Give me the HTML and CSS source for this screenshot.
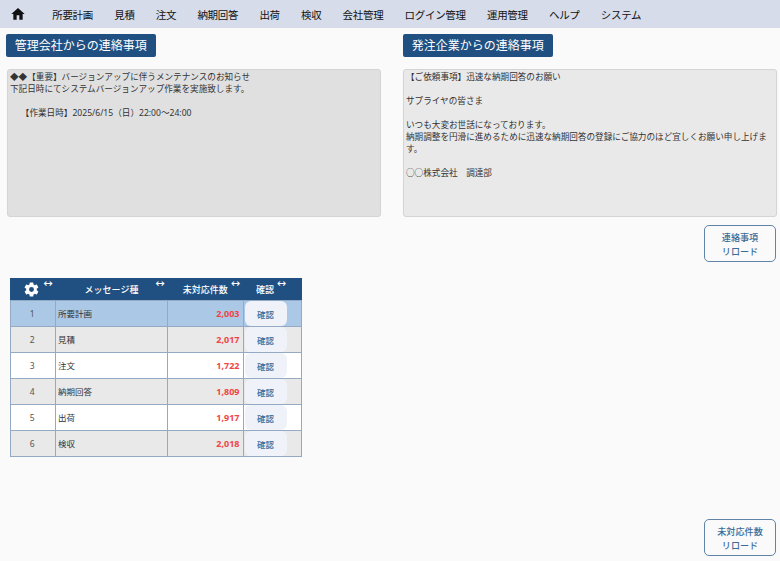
FILE: index.html
```html
<!DOCTYPE html>
<html lang="ja">
<head>
<meta charset="utf-8">
<title>連絡事項</title>
<link rel="stylesheet" href="styles.css">
</head>
<body>
<nav class="nav">
  <svg class="home" viewBox="0 0 24 24" width="16" height="16"><path d="M10 20.500v-6.500h4v6.500h5v-8.500h3L12 3 2 12h3v8.500z"/></svg>
  <a>所要計画</a><a>見積</a><a>注文</a><a>納期回答</a><a>出荷</a><a>検収</a><a>会社管理</a><a>ログイン管理</a><a>運用管理</a><a>ヘルプ</a><a>システム</a>
</nav>
<main class="main">
  <section class="notices">
    <div class="notice">
      <h2 class="title">管理会社からの連絡事項</h2>
      <div class="box box-dark">◆◆【重要】バージョンアップに伴うメンテナンスのお知らせ
下記日時にてシステムバージョンアップ作業を実施致します。

　 【作業日時】2025/6/15（日）22:00～24:00</div>
    </div>
    <div class="notice">
      <h2 class="title">発注企業からの連絡事項</h2>
      <div class="box box-light">【ご依頼事項】迅速な納期回答のお願い

サプライヤの皆さま

いつも大変お世話になっております。
納期調整を円滑に進めるために迅速な納期回答の登録にご協力のほど宜しくお願い申し上げます。

○○株式会社　調達部</div>
      <button class="reload">連絡事項<br>リロード</button>
    </div>
  </section>
  <section class="lower">
    <table class="grid">
      <colgroup><col class="c1"><col class="c2"><col class="c3"><col class="c4"></colgroup>
      <thead>
        <tr>
          <th><span class="hcell">
            <svg class="gear" viewBox="0 0 24 24" width="17" height="17"><path d="M19.400 13c.04-.32.070-.65.070-1s-.030-.68-.070-1l2.100-1.650c.19-.15.240-.42.120-.64l-2-3.460c-.12-.22-.39-.3-.61-.22l-2.490 1c-.52-.4-1.080-.73-1.690-.98l-.38-2.650A.49.49 0 0 0 14 2h-4c-.25 0-.46.18-.49.42l-.38 2.650c-.61.25-1.170.59-1.690.98l-2.490-1c-.23-.09-.49 0-.61.22l-2 3.460c-.13.22-.07.49.12.64L4.570 11c-.04.32-.07.660-.07 1s.03.68.07 1l-2.110 1.650c-.19.15-.24.42-.12.64l2 3.460c.12.22.39.3.61.22l2.490-1c.52.4 1.080.73 1.690.98l.38 2.650c.03.24.24.42.49.42h4c.25 0 .46-.18.49-.42l.38-2.650c.61-.25 1.170-.59 1.690-.98l2.490 1c.23.09.49 0 .61-.22l2-3.460c.12-.22.07-.49-.12-.64L19.400 13zM12 15.500a3.500 3.500 0 1 1 0-7 3.500 3.500 0 0 1 0 7z"/></svg>
            <i class="resize">↔</i></span></th>
          <th><span class="hcell">メッセージ種<i class="resize">↔</i></span></th>
          <th><span class="hcell">未対応件数<i class="resize">↔</i></span></th>
          <th><span class="hcell hcell-last">確認<i class="resize resize-last">↔</i></span></th>
        </tr>
      </thead>
      <tbody>
        <tr class="selected"><td class="no">1</td><td>所要計画</td><td class="count">2,003</td><td class="act"><button class="confirm">確認</button></td></tr>
        <tr class="alt"><td class="no">2</td><td>見積</td><td class="count">2,017</td><td class="act"><button class="confirm">確認</button></td></tr>
        <tr><td class="no">3</td><td>注文</td><td class="count">1,722</td><td class="act"><button class="confirm">確認</button></td></tr>
        <tr class="alt"><td class="no">4</td><td>納期回答</td><td class="count">1,809</td><td class="act"><button class="confirm">確認</button></td></tr>
        <tr><td class="no">5</td><td>出荷</td><td class="count">1,917</td><td class="act"><button class="confirm">確認</button></td></tr>
        <tr class="alt"><td class="no">6</td><td>検収</td><td class="count">2,018</td><td class="act"><button class="confirm">確認</button></td></tr>
      </tbody>
    </table>
    <button class="reload reload-bottom">未対応件数<br>リロード</button>
  </section>
</main>
</body>
</html>
```
FILE: styles.css
```css
* { box-sizing: border-box; }
html, body { margin: 0; height: 100%; }
body {
  width: 780px;
  height: 561px;
  overflow: hidden;
  background: #fafafa;
  color: #222;
  font-family: "Noto Sans", "Noto Sans CJK JP", sans-serif;
  display: flex;
  flex-direction: column;
}
.nav {
  height: 28px;
  flex: none;
  background: #d6dce9;
  display: flex;
  align-items: center;
  padding-left: 10px;
  gap: 21.200px;
  font-size: 10.500px;
  letter-spacing: -.3px;
  color: #111;
}
.home { margin-right: 5px; fill: #111; }
.main {
  flex: 1;
  display: flex;
  flex-direction: column;
  padding: 6px 3px 5px 6px;
}
.notices {
  display: grid;
  grid-template-columns: 375px 375px;
  column-gap: 22px;
}
.notice { display: flex; flex-direction: column; }
.title {
  margin: 0 0 12px;
  width: 149.500px;
  height: 23px;
  background: #205081;
  color: #fff;
  border-radius: 2px;
  font-size: 12px;
  font-weight: 400;
  line-height: 23px;
  text-align: center;
  white-space: nowrap;
}
.box {
  width: 374px;
  height: 148px;
  margin-left: 1px;
  padding: 1px 2px 0;
  border: 1px solid #d4d4d4;
  border-radius: 3px;
  font-size: 8.600px;
  line-height: 12px;
  white-space: pre-wrap;
  color: #333;
}
.notice:last-child .box { margin-left: 0; }
.box-dark { background: #e0e0e0; }
.box-light { background: #e9e9e9; }
.reload {
  width: 72px;
  height: 37px;
  padding: 0;
  background: #fafafa;
  border: 1px solid #5f84a8;
  border-radius: 5px;
  color: #3a6c98;
  font: 500 9.100px/14px "Noto Sans CJK JP", sans-serif;
  align-self: flex-end;
  margin: 8px 2px 0 0;
}
.lower {
  flex: 1;
  display: flex;
  flex-direction: column;
  padding: 0 0 0 4px;
}
.grid {
  margin: 16px 0 0 -.5px;
  width: 291.500px;
  table-layout: fixed;
  border-collapse: collapse;
  font-size: 8.500px;
  color: #333;
}
.c1 { width: 45.500px; }
.c2 { width: 112px; }
.c3 { width: 75.500px; }
.c4 { width: 58.500px; }
.grid th {
  height: 22px;
  padding: 0;
  background: #205081;
  color: #fff;
  font-weight: 500;
  font-size: 9px;
}
.hcell {
  display: flex;
  position: relative;
  align-items: center;
  justify-content: center;
  height: 22px;
}
.hcell-last { width: 44px; }
.resize {
  position: absolute;
  top: 1px;
  right: 3px;
  font-style: normal;
  font-size: 11px;
  line-height: 10px;
  font-weight: 400;
  font-family: "DejaVu Sans", sans-serif;
}
.resize-last { right: 1px; }
.gear { fill: #fff; margin-right: 3px; }
.grid td {
  height: 26px;
  padding: 0 3px 1px 2px;
  border: 1px solid #94a9c4;
  background: #fff;
}
.grid .alt td { background: #e9e9e9; }
.grid .selected td { background: #abc9e6; }
.grid td.no { text-align: center; color: #555; }
.grid td.count {
  text-align: right;
  color: #f04545;
  font-weight: 700;
  font-size: 9px;
}
.grid td.act { padding: 0 0 0 1px; }
.confirm {
  display: block;
  width: 42px;
  height: 25px;
  padding: 0;
  border: 0;
  border-radius: 6px;
  background: #eff3f9;
  color: #3a6c98;
  font: 500 8.500px "Noto Sans CJK JP", sans-serif;
}
.reload-bottom { margin-top: auto; margin-right: 1px; }
```
